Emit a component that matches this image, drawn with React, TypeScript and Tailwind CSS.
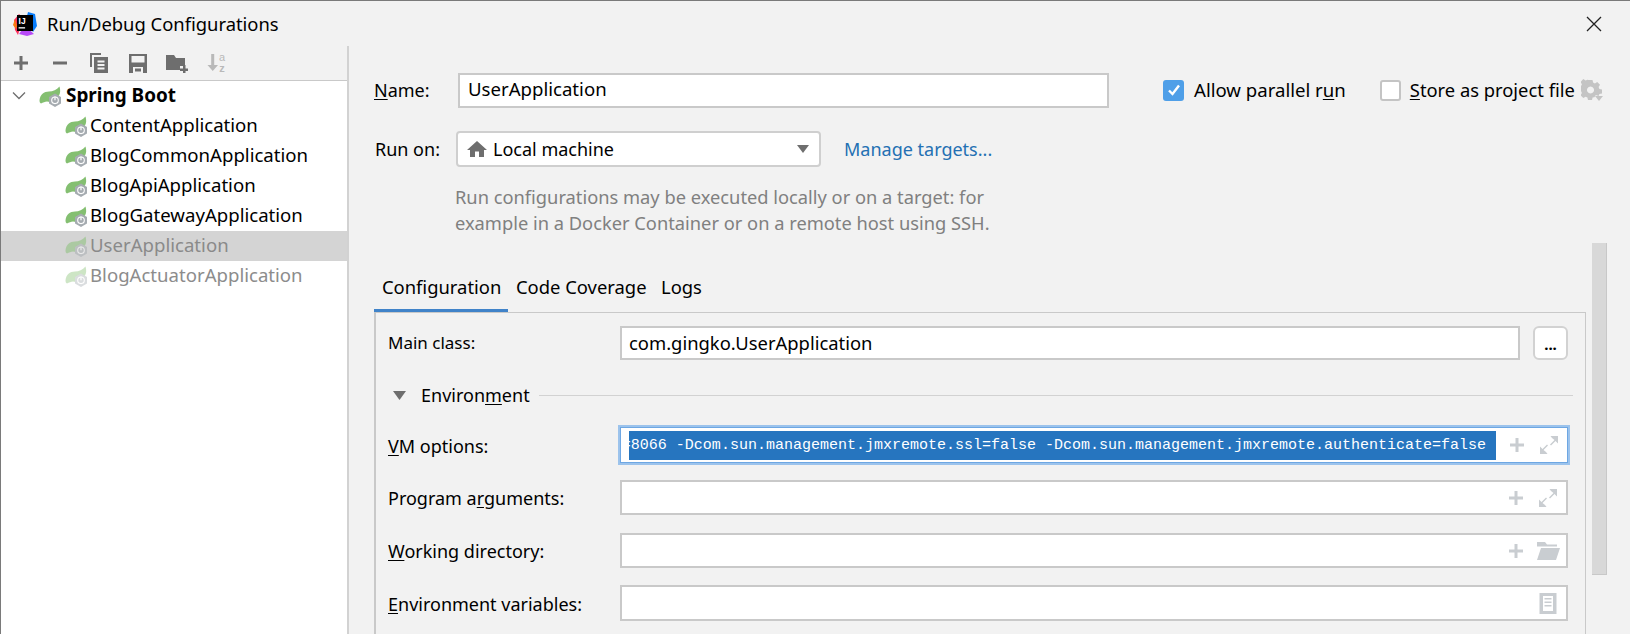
import React from "react";

const UI_FONT = "font-['Noto_Sans','Open_Sans',sans-serif]";

// Spring run config icon: leaf + grey hexagon with power glyph
function SpringIcon({ faded = "" }: { faded?: string }) {
  return (
    <svg viewBox="0 0 24 22" className={`w-[24px] h-[22px] shrink-0 ${faded}`}>
      <path
        d="M0.5 15.5 C1 9.5 5 6.5 10 6.5 C14 6.5 17.5 5 20.5 1.5 C21.5 5 21.5 8 20 10.5 L11 17 L8 16.5 C6 16.5 4 17.5 2 18.5 C1 18 0.5 17 0.5 15.5 Z"
        fill="#84bf71"
      />
      <path d="M16 8.5 L22 12 L22 18.5 L16 22 L10 18.5 L10 12 Z" fill="#a5abb0" />
      <circle cx="16" cy="15.3" r="3.3" fill="none" stroke="#fff" strokeWidth="1.1" />
      <path d="M16 11.5 V15.3" stroke="#fff" strokeWidth="1.2" />
    </svg>
  );
}

function AppLogo() {
  return (
    <svg viewBox="0 0 24 24" className="w-[24px] h-[24px] shrink-0">
      <path d="M1 8 L6 2 L10 6 L5 23 L2 18 Z" fill="#fe315d" />
      <path d="M4 14 L2 7 L0 13 L3 17 Z" fill="#f97a12" />
      <path d="M15 0 L22 2 L24 14 L20 20 L13 8 Z" fill="#087cfa" />
      <path d="M6 22 L14 24 L21 22 L12 14 Z" fill="#b74af7" />
      <rect x="4" y="3" width="16" height="16" fill="#000" />
      <text x="5.600" y="11.500" fontSize="8.500" fontWeight="700" fill="#fff" fontFamily="'Liberation Sans', sans-serif">
        IJ
      </text>
      <rect x="5.600" y="15.200" width="6.500" height="1.300" fill="#fff" />
    </svg>
  );
}

function ToolIcon({ children }: { children: React.ReactNode }) {
  return (
    <svg viewBox="0 0 20 20" className="w-[20px] h-[20px] text-[#6e6e6e]" fill="currentColor">
      {children}
    </svg>
  );
}

function Toolbar() {
  return (
    <div className="h-[34px] flex items-center gap-[19px] pl-[10px]">
      <ToolIcon>
        <path d="M8.5 3 h3 v5.5 H17 v3 h-5.5 V17 h-3 v-5.5 H3 v-3 h5.5 Z" />
      </ToolIcon>
      <ToolIcon>
        <rect x="3" y="8.5" width="14" height="3" />
      </ToolIcon>
      <ToolIcon>
        <path d="M1 0 h11 v2 H3 v12 H1 Z" />
        <path fillRule="evenodd" d="M5 4 h14 v16 H5 Z M8.5 7.5 v2 h7 v-2 Z M8.5 11 v2 h7 v-2 Z M8.5 14.500 v2 h7 v-2 Z" />
      </ToolIcon>
      <ToolIcon>
        <path
          fillRule="evenodd"
          d="M1 1 h18 v19 H1 Z M3.500 3 v6.500 h13 V3 Z M5 14 v6 h10 v-6 Z M7 15.500 h6 v3 H7 Z"
        />
      </ToolIcon>
      <svg viewBox="0 0 22 20" className="w-[22px] h-[20px] text-[#6e6e6e] -ml-px" fill="currentColor">
        <path d="M0 2 h8 l2 3 h9 v8 h-5 v4 H0 Z" />
        <path d="M17 12 h2.500 v3.500 H22 v2.500 h-2.500 V20 H17 v-2 h-3 v-2.500 h3 Z" />
      </svg>
      <div className="flex items-center text-[#b9b9b9]">
        <svg viewBox="0 0 12 18" className="w-[12px] h-[18px]" fill="currentColor">
          <path d="M4.200 0 h3 v11 H11 l-5.250 6 L0.500 11 h3.700 Z" />
        </svg>
        <div className="flex flex-col items-center font-['Liberation_Sans',sans-serif] text-[11px] leading-[11px]">
          <span>a</span>
          <span className="font-bold">z</span>
        </div>
      </div>
    </div>
  );
}

const configs = [
  { name: "ContentApplication", text: "text-black", row: "", icon: "" },
  { name: "BlogCommonApplication", text: "text-black", row: "", icon: "" },
  { name: "BlogApiApplication", text: "text-black", row: "", icon: "" },
  { name: "BlogGatewayApplication", text: "text-black", row: "", icon: "" },
  { name: "UserApplication", text: "text-[#8a8a8a]", row: "bg-[#d4d4d4]", icon: "opacity-50" },
  { name: "BlogActuatorApplication", text: "text-[#8c8c8c]", row: "", icon: "opacity-40" },
];

function Tree() {
  return (
    <div className="flex-1 bg-white border-t-[1px] border-[#c9c9c9]">
      <div className="h-[30px] flex items-center pl-[11px]">
        <svg viewBox="0 0 14 14" className="w-[14px] h-[14px] text-[#6e6e6e]" fill="none" stroke="currentColor" strokeWidth="1.300">
          <path d="M1 3.500 L7 9.500 L13 3.500" />
        </svg>
        <span className="ml-[13px]">
          <SpringIcon />
        </span>
        <span className="ml-[3px] pb-[2px] text-[18.900px] font-bold text-black">Spring Boot</span>
      </div>
      {configs.map((c) => (
        <div key={c.name} className={`h-[30px] flex items-center pl-[64px] ${c.row}`}>
          <SpringIcon faded={c.icon} />
          <span className={`ml-[1px] pb-[2px] text-[18.600px] ${c.text}`}>{c.name}</span>
        </div>
      ))}
    </div>
  );
}

function PlusIcon() {
  return (
    <svg viewBox="0 0 16 16" className="w-[16px] h-[16px] text-[#c9cdd1] mr-[12px]" fill="currentColor">
      <path d="M6.500 1 h3 v5.500 H15 v3 H9.500 V15 h-3 V9.500 H1 v-3 h5.500 Z" />
    </svg>
  );
}

function ExpandIcon() {
  return (
    <svg viewBox="0 0 24 20" className="w-[24px] h-[20px] text-[#c9cdd1]" fill="currentColor">
      <path d="M13.500 1 H21 V8.500 L18.500 6 L14 10.500 L13 9.500 L17.500 5 L15 3 Z" />
      <path d="M3 19 V11.500 L5.500 14 L10 9.500 L11 10.500 L6.500 15 L9 17 L10.500 19 Z" />
    </svg>
  );
}

function FolderIcon() {
  return (
    <svg viewBox="0 0 24 20" className="w-[24px] h-[20px] text-[#c9cdd1]" fill="currentColor">
      <path d="M1 1 h8 l2 2.500 h10 v2 H1 Z" />
      <path d="M5 7 h19 l-4 12 H1 Z" />
    </svg>
  );
}

function DocIcon() {
  return (
    <svg viewBox="0 0 24 22" className="w-[24px] h-[22px] text-[#c9cdd1]" fill="currentColor">
      <path
        fillRule="evenodd"
        d="M3.500 1 H20.500 V22 H3.500 Z M7 4 V19 H17 V4 Z M8.500 6 h7 v1.500 h-7 Z M8.500 9.500 h7 V11 h-7 Z M8.500 13 h7 v1.500 h-7 Z"
      />
    </svg>
  );
}

function FieldRow({
  label,
  height,
  mt,
  children,
}: {
  label: React.ReactNode;
  height: string;
  mt: string;
  children?: React.ReactNode;
}) {
  return (
    <div className={`flex items-center ${mt}`}>
      <div className="w-[232px] pt-[2px] text-[18px] text-black">{label}</div>
      <div className={`w-[948px] ${height} bg-white border-2 border-[#c9c9c9] flex items-center justify-end pr-[6px]`}>
        {children}
      </div>
    </div>
  );
}

export default function App() {
  return (
    <div className={`w-[1630px] h-[634px] overflow-hidden bg-[#f2f2f2] border-t-[1px] border-l-[1px] border-[#7a7a7a] flex flex-col ${UI_FONT}`}>
      {/* title bar */}
      <div className="h-[45px] shrink-0 flex items-center pl-[12px] pr-[28px]">
        <AppLogo />
        <span className="ml-[10px] text-[18.400px] text-black">Run/Debug Configurations</span>
        <svg viewBox="0 0 16 16" className="w-[16px] h-[16px] ml-auto text-[#222]" fill="none" stroke="currentColor" strokeWidth="1.300">
          <path d="M1 1 L15 15 M15 1 L1 15" />
        </svg>
      </div>

      <div className="flex-1 flex min-h-0">
        {/* left tree */}
        <div className="w-[348px] shrink-0 border-r-2 border-[#d2d2d2] flex flex-col">
          <Toolbar />
          <Tree />
        </div>

        {/* right side */}
        <div className="flex-1 pl-[25px] min-w-0">
          {/* name row */}
          <div className="mt-[27px] flex items-center h-[34px]">
            <span className="w-[84px] text-[18px] text-black">
              <span className="underline underline-offset-2">N</span>ame:
            </span>
            <div className="w-[651px] h-[35px] bg-white border-2 border-[#c9c9c9] flex items-center pl-[8px] pb-[2px] text-[18.600px] text-black">
              UserApplication
            </div>
            <div className="ml-[54px] w-[21px] h-[21px] rounded-[3px] bg-[#4f9fe8] flex items-center justify-center">
              <svg viewBox="0 0 14 14" className="w-[14px] h-[14px]" fill="none" stroke="#fff" strokeWidth="2.400">
                <path d="M2 7.500 L5.500 11 L12 2.500" />
              </svg>
            </div>
            <span className="ml-[10px] text-[18.600px] text-black">
              Allow parallel r<span className="underline underline-offset-2">u</span>n
            </span>
            <div className="ml-[34px] w-[21px] h-[21px] rounded-[3px] bg-white border-2 border-[#c4c4c4]" />
            <span className="ml-[9px] text-[18.350px] text-black">
              <span className="underline underline-offset-2">S</span>tore as project file
            </span>
            <div className="ml-[6px] relative w-[22px] h-[22px]">
              <svg viewBox="0 0 22 22" className="w-[22px] h-[22px] text-[#c4c4c4]" fill="currentColor">
                <path
                  fillRule="evenodd"
                  d="M7.500 1 h4 l.6 2.600 l1.800 .8 l2.300 -1.400 l2.800 2.800 l-1.400 2.300 l.8 1.800 l2.600 .6 v4 l-2.600 .6 l-.8 1.800 l-2.800 -.9 l-1.400 2.300 l-1.800 .2 l-.6 2.600 h-4 l-.6 -2.600 l-1.800 -.8 l-2.300 1.400 l-2.800 -2.800 l1.400 -2.300 l-.8 -1.800 l-2.600 -.6 v-4 l2.600 -.6 l.8 -1.800 l-1.400 -2.300 l2.800 -2.800 l2.300 1.400 l1.800 -.8 Z M9.500 7.500 a3.500 3.500 0 1 0 .01 0 Z"
                />
              </svg>
              <svg viewBox="0 0 8 5" className="absolute right-0 bottom-0 w-[8px] h-[5px] text-[#c4c4c4]" fill="currentColor">
                <path d="M0 0 H8 L4 5 Z" />
              </svg>
            </div>
          </div>

          {/* run on row */}
          <div className="mt-[24px] flex items-center h-[36px]">
            <span className="w-[82px] text-[18px] text-black pl-px">Run on:</span>
            <div className="w-[365px] h-[36px] bg-white border-2 border-[#cfcfcf] rounded-[4px] flex items-center pl-[9px] pr-[10px]">
              <svg viewBox="0 0 20 18" className="w-[20px] h-[18px] text-[#6e6e6e]" fill="currentColor">
                <path d="M10 1 L20 10 H17 V17 H12 V11.500 H8 V17 H3 V10 H0 Z" />
              </svg>
              <span className="ml-[6px] text-[18px] text-black">Local machine</span>
              <svg viewBox="0 0 12 8" className="ml-auto w-[12px] h-[8px] text-[#6e6e6e]" fill="currentColor">
                <path d="M0 0 H12 L6 8 Z" />
              </svg>
            </div>
            <span className="ml-[23px] text-[18px] text-[#2470b3]">Manage targets...</span>
          </div>

          <div className="mt-[17px] ml-[81px] text-[18.300px] leading-[26px] text-[#808080]">
            <div>Run configurations may be executed locally or on a target: for</div>
            <div>example in a Docker Container or on a remote host using SSH.</div>
          </div>

          <div className="flex items-start">
            <div className="w-[1212px] shrink-0">
              {/* tabs */}
              <div className="mt-[30px] h-[46px] flex items-stretch text-[18.400px] text-black">
                <div className="w-[134px] pl-[8px] pt-[7px] border-b-[3px] border-[#4083c9]">Configuration</div>
                <div className="w-[147px] pl-[8px] pt-[7px]">Code Coverage</div>
                <div className="pl-[6px] pt-[7px]">Logs</div>
              </div>

              {/* panel */}
              <div className="h-[400px] border-t-[1px] border-l-2 border-r-[1px] border-[#c9c9c9] pl-[12px] pr-[12px]">
                <div className="mt-[13px] flex items-center">
                  <div className="w-[232px] text-[17px] text-black">Main class:</div>
                  <div className="w-[900px] h-[34px] bg-white border-2 border-[#c9c9c9] flex items-center pl-[7px] text-[18.400px] text-black">
                    com.gingko.UserApplication
                  </div>
                  <div className="ml-[13px] w-[35px] h-[34px] bg-white border-2 border-[#d2d2d2] rounded-[6px] flex items-center justify-center pt-[3px] text-[15px] font-bold text-black">
                    ...
                  </div>
                </div>

                <div className="mt-[23px] h-[24px] flex items-center">
                  <svg viewBox="0 0 13 9" className="ml-[5px] w-[13px] h-[9px] text-[#6e6e6e]" fill="currentColor">
                    <path d="M0 0 H13 L6.500 9 Z" />
                  </svg>
                  <span className="ml-[15px] text-[18px] text-black">
                    Environ<span className="underline underline-offset-2">m</span>ent
                  </span>
                  <div className="ml-[9px] flex-1 h-px bg-[#d2d2d2]" />
                </div>

                <div className="mt-[20px] flex items-center">
                  <div className="w-[232px] pt-[3px] text-[18px] text-black">
                    <span className="underline underline-offset-2">V</span>M options:
                  </div>
                  <div className="w-[948px] h-[36px] bg-white border border-[#6ea7e3] shadow-[0_0_0_2px_#9cc3ec] flex items-center pl-[8px] pr-[6px]">
                    <div className="w-[867px] h-[29px] bg-[#2675bf] overflow-hidden flex items-center justify-end pr-[10px] pt-[2px] whitespace-nowrap font-['Liberation_Mono',monospace] text-[15px] text-white">
                      =8066 -Dcom.sun.management.jmxremote.ssl=false -Dcom.sun.management.jmxremote.authenticate=false
                    </div>
                    <div className="ml-auto flex items-center">
                      <PlusIcon />
                      <ExpandIcon />
                    </div>
                  </div>
                </div>

                <FieldRow
                  mt="mt-[17px]"
                  height="h-[35px]"
                  label={
                    <>
                      Program a<span className="underline underline-offset-2">r</span>guments:
                    </>
                  }
                >
                  <PlusIcon />
                  <ExpandIcon />
                </FieldRow>
                <FieldRow
                  mt="mt-[18px]"
                  height="h-[35px]"
                  label={
                    <>
                      <span className="underline underline-offset-2">W</span>orking directory:
                    </>
                  }
                >
                  <PlusIcon />
                  <FolderIcon />
                </FieldRow>
                <FieldRow
                  mt="mt-[17px]"
                  height="h-[36px]"
                  label={
                    <>
                      <span className="underline underline-offset-2">E</span>nvironment variables:
                    </>
                  }
                >
                  <DocIcon />
                </FieldRow>
              </div>
            </div>

            {/* scrollbar */}
            <div className="ml-[6px] mt-[7px] w-[15px] h-[332px] bg-[#d8d8d8] border-r-[1px] border-b-[1px] border-[#c8c8c8]" />
          </div>
        </div>
      </div>
    </div>
  );
}
